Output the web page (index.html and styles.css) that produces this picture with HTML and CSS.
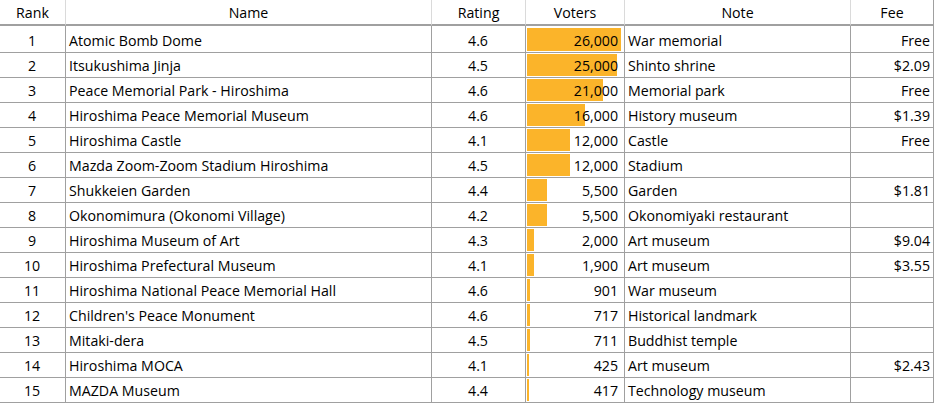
FILE: index.html
```html
<!DOCTYPE html>
<html>
<head>
<meta charset="utf-8">
<link rel="stylesheet" href="styles.css">
</head>
<body>
<div class="grid">
  <div class="hd">Rank</div><div class="hd">Name</div><div class="hd">Rating</div><div class="hd">Voters</div><div class="hd">Note</div><div class="hd last">Fee</div>

  <div class="c ctr first">1</div><div class="c first">Atomic Bomb Dome</div><div class="c ctr first">4.6</div><div class="c vot first"><span class="bar" style="width:94px"></span><span class="num">26,000</span></div><div class="c first">War memorial</div><div class="c rt first">Free</div>
  <div class="c ctr">2</div><div class="c">Itsukushima Jinja</div><div class="c ctr">4.5</div><div class="c vot"><span class="bar" style="width:90px"></span><span class="num">25,000</span></div><div class="c">Shinto shrine</div><div class="c rt">$2.09</div>
  <div class="c ctr">3</div><div class="c">Peace Memorial Park - Hiroshima</div><div class="c ctr">4.6</div><div class="c vot"><span class="bar" style="width:76px"></span><span class="num">21,000</span></div><div class="c">Memorial park</div><div class="c rt">Free</div>
  <div class="c ctr">4</div><div class="c">Hiroshima Peace Memorial Museum</div><div class="c ctr">4.6</div><div class="c vot"><span class="bar" style="width:58px"></span><span class="num">16,000</span></div><div class="c">History museum</div><div class="c rt">$1.39</div>
  <div class="c ctr">5</div><div class="c">Hiroshima Castle</div><div class="c ctr">4.1</div><div class="c vot"><span class="bar" style="width:43px"></span><span class="num">12,000</span></div><div class="c">Castle</div><div class="c rt">Free</div>
  <div class="c ctr">6</div><div class="c">Mazda Zoom-Zoom Stadium Hiroshima</div><div class="c ctr">4.5</div><div class="c vot"><span class="bar" style="width:43px"></span><span class="num">12,000</span></div><div class="c">Stadium</div><div class="c rt"></div>
  <div class="c ctr">7</div><div class="c">Shukkeien Garden</div><div class="c ctr">4.4</div><div class="c vot"><span class="bar" style="width:20px"></span><span class="num">5,500</span></div><div class="c">Garden</div><div class="c rt">$1.81</div>
  <div class="c ctr">8</div><div class="c">Okonomimura (Okonomi Village)</div><div class="c ctr">4.2</div><div class="c vot"><span class="bar" style="width:20px"></span><span class="num">5,500</span></div><div class="c">Okonomiyaki restaurant</div><div class="c rt"></div>
  <div class="c ctr">9</div><div class="c">Hiroshima Museum of Art</div><div class="c ctr">4.3</div><div class="c vot"><span class="bar" style="width:7px"></span><span class="num">2,000</span></div><div class="c">Art museum</div><div class="c rt">$9.04</div>
  <div class="c ctr">10</div><div class="c">Hiroshima Prefectural Museum</div><div class="c ctr">4.1</div><div class="c vot"><span class="bar" style="width:7px"></span><span class="num">1,900</span></div><div class="c">Art museum</div><div class="c rt">$3.55</div>
  <div class="c ctr">11</div><div class="c">Hiroshima National Peace Memorial Hall</div><div class="c ctr">4.6</div><div class="c vot"><span class="bar" style="width:3px"></span><span class="num">901</span></div><div class="c">War museum</div><div class="c rt"></div>
  <div class="c ctr">12</div><div class="c">Children's Peace Monument</div><div class="c ctr">4.6</div><div class="c vot"><span class="bar" style="width:3px"></span><span class="num">717</span></div><div class="c">Historical landmark</div><div class="c rt"></div>
  <div class="c ctr">13</div><div class="c">Mitaki-dera</div><div class="c ctr">4.5</div><div class="c vot"><span class="bar" style="width:3px"></span><span class="num">711</span></div><div class="c">Buddhist temple</div><div class="c rt"></div>
  <div class="c ctr">14</div><div class="c">Hiroshima MOCA</div><div class="c ctr">4.1</div><div class="c vot"><span class="bar" style="width:2px"></span><span class="num">425</span></div><div class="c">Art museum</div><div class="c rt">$2.43</div>
  <div class="c ctr">15</div><div class="c">MAZDA Museum</div><div class="c ctr">4.4</div><div class="c vot"><span class="bar" style="width:2px"></span><span class="num">417</span></div><div class="c">Technology museum</div><div class="c rt"></div>
</div>
</body>
</html>
```
FILE: styles.css
```css
html, body {
  margin: 0;
  padding: 0;
  background: #ffffff;
}
body {
  font-family: "Open Sans", "Noto Sans", sans-serif;
  font-size: 14.2px;
  color: #000000;
}
.grid {
  display: grid;
  grid-template-columns: 66px 366px 94px 99px 226px 83px;
  width: 934px;
}
.hd {
  box-sizing: border-box;
  height: 26px;
  padding-top: 1px;
  border-right: 1px solid #dadada;
  border-bottom: 2px solid #a0a0a0;
  text-align: center;
  line-height: 24px;
  white-space: nowrap;
}
.hd.last {
  border-right: 1px solid #a0a0a0;
}
.c {
  box-sizing: border-box;
  height: 25px;
  padding: 2px 4px 0 3px;
  border-right: 1px solid #a0a0a0;
  border-bottom: 1px solid #a0a0a0;
  line-height: 22px;
  white-space: nowrap;
}
.c.first {
  height: 27px;
  padding-top: 3px;
  line-height: 23px;
}
.ctr {
  text-align: center;
}
.rt {
  text-align: right;
  padding-right: 3px;
}
.vot {
  position: relative;
  text-align: right;
  padding-right: 6px;
}
.bar {
  position: absolute;
  left: 1px;
  top: 1px;
  bottom: 1px;
  background: #fbb42a;
}
.first .bar {
  top: 2px;
}
.num {
  position: relative;
}
```
